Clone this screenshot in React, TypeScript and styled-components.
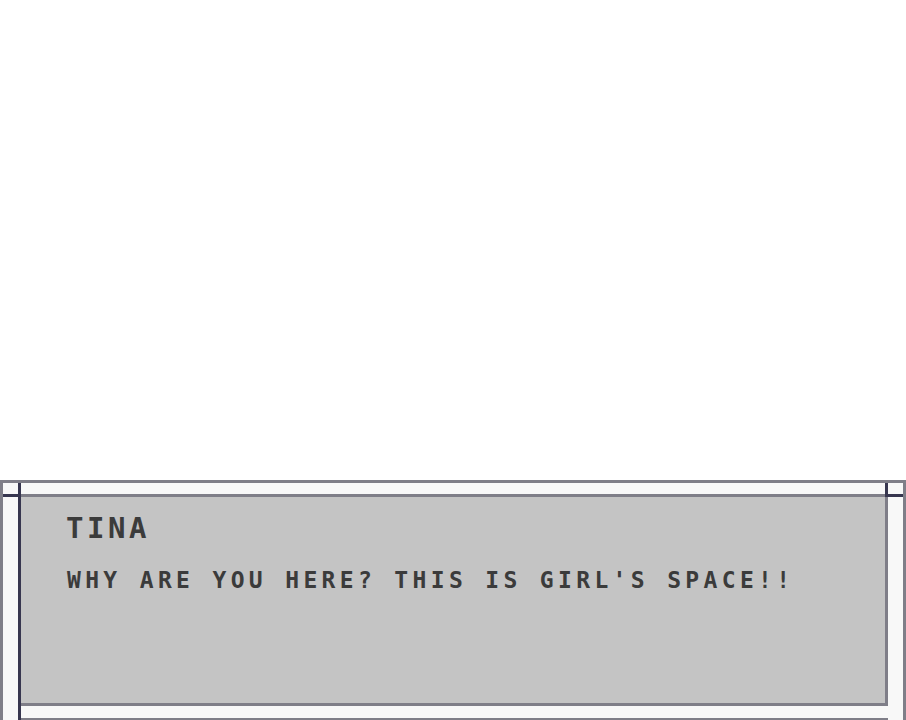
import React from "react";
import styled, { createGlobalStyle } from "styled-components";

const Global = createGlobalStyle`
  html, body { margin: 0; padding: 0; background: #ffffff; }
  * { box-sizing: border-box; }
`;

const GRAY = "#7f7e88";
const DARK = "#37364f";
const LIGHT = "#f8f8f8";
const FILL = "#c4c4c4";
const INK = "#3b3b3b";

const Page = styled.div`
  height: 720px;
  display: flex;
  flex-direction: column;
  justify-content: flex-end;
  overflow: hidden;
`;

const Frame = styled.section`
  position: relative;
  height: 240px;
  border: 3px solid ${GRAY};
  border-bottom: none;
  background: ${LIGHT};
  padding: 11px 15px 0;
  display: flex;
  flex-direction: column;
  gap: 12px;
  overflow: hidden;
`;

const Box = styled.div<{ $height: number }>`
  flex: none;
  height: ${(p) => p.$height}px;
  background: ${FILL};
  border: 3px solid ${GRAY};
  border-left-color: ${DARK};
  padding: 16px 42px 16px 45px;
  display: flex;
  flex-direction: column;
  gap: 25px;
  font-family: "DejaVu Sans Mono", "Liberation Mono", monospace;
  font-weight: bold;
  color: ${INK};
  text-transform: uppercase;
`;

const Name = styled.div`
  font-size: 29px;
  line-height: 30px;
  letter-spacing: 3.5px;
`;

const Message = styled.div`
  font-size: 23px;
  line-height: 24px;
  letter-spacing: 4.34px;
  padding-left: 1px;
  white-space: nowrap;
`;

const Guide = styled.span<{ $side: "left" | "right"; $axis: "v" | "h" }>`
  position: absolute;
  background: ${DARK};
  ${(p) =>
    p.$axis === "v"
      ? `top: -3px; width: 3px; ${p.$side === "left" ? "left: 15px; bottom: 0;" : "right: 15px; height: 17px;"}`
      : `top: 11px; height: 3px; width: 18px; ${p.$side}: -3px;`}
`;

export default function App() {
  return (
    <Page>
      <Global />
      <Frame>
        <Box $height={212}>
          <Name>Tina</Name>
          <Message>Why are you here? This is girl's space!!</Message>
        </Box>
        <Box $height={212} aria-hidden />
        <Guide $side="left" $axis="v" />
        <Guide $side="right" $axis="v" />
        <Guide $side="left" $axis="h" />
        <Guide $side="right" $axis="h" />
      </Frame>
    </Page>
  );
}
